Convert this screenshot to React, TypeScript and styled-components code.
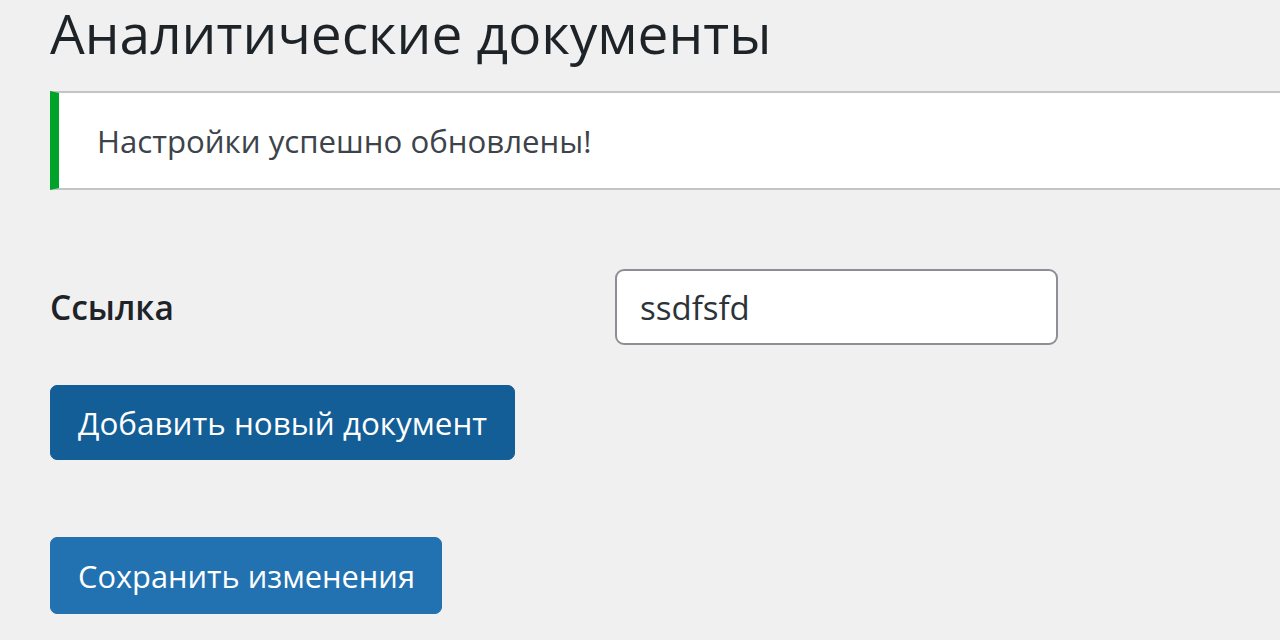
import styled, { createGlobalStyle } from "styled-components";

const GlobalStyle = createGlobalStyle`
  html, body {
    margin: 0;
    padding: 0;
    background: #f0f0f1;
  }
  body {
    font-family: "Open Sans", "Noto Sans", sans-serif;
    color: #3c434a;
  }
`;

const Wrap = styled.div`
  width: 1280px;
  height: 640px;
  overflow: hidden;
  padding: 0 0 0 50px;
  box-sizing: border-box;
`;

const Title = styled.h1`
  margin: 0;
  height: 91px;
  font-size: 55px;
  font-weight: 400;
  line-height: 66px;
  color: #1d2327;
`;

const Notice = styled.div`
  display: flex;
  align-items: center;
  height: 99px;
  width: 1300px;
  box-sizing: border-box;
  background: #fff;
  border: 2px solid #c3c4c7;
  border-left: 9px solid #00a32a;
  padding-left: 38px;
  font-size: 31.2px;
  color: #3c434a;
`;

const FormRow = styled.div`
  display: flex;
  align-items: center;
  margin-top: 79px;
`;

const Label = styled.label`
  width: 565px;
  font-size: 33.5px;
  font-weight: 600;
  color: #1d2327;
`;

const Input = styled.input`
  width: 443px;
  height: 76px;
  box-sizing: border-box;
  border: 2px solid #8c8f94;
  border-radius: 9px;
  padding: 0 23px;
  font-family: inherit;
  font-size: 33px;
  color: #2c3338;
  background: #fff;
  outline: none;
`;

const Button = styled.button<{ $dark?: boolean }>`
  display: block;
  height: 75px;
  box-sizing: border-box;
  padding: 0 27px;
  border: 1px solid ${(p) => (p.$dark ? "#135e96" : "#2271b1")};
  border-radius: 7px;
  background: ${(p) => (p.$dark ? "#135e96" : "#2271b1")};
  color: #fff;
  font-family: inherit;
  font-size: 31.2px;
  cursor: pointer;
`;

const AddButton = styled(Button)`
  margin-top: 40px;
  font-size: 31.4px;
`;

const SaveButton = styled(Button)`
  margin-top: 77px;
  padding: 0 26px 0 27px;
  font-size: 30.8px;
  height: 77px;
`;

export default function App() {
  return (
    <>
      <GlobalStyle />
      <Wrap>
        <Title>Аналитические документы</Title>
        <Notice>Настройки успешно обновлены!</Notice>
        <FormRow>
          <Label htmlFor="link">Ссылка</Label>
          <Input id="link" defaultValue="ssdfsfd" />
        </FormRow>
        <AddButton $dark>Добавить новый документ</AddButton>
        <SaveButton>Сохранить изменения</SaveButton>
      </Wrap>
    </>
  );
}
